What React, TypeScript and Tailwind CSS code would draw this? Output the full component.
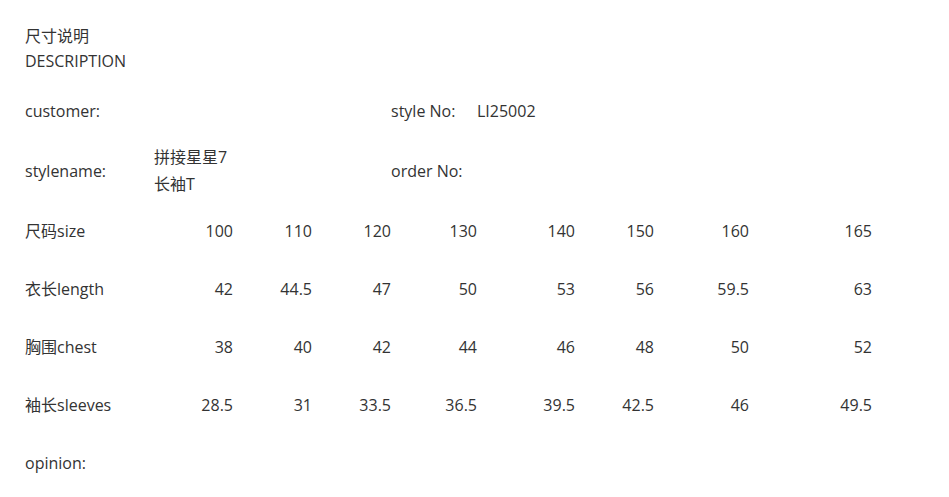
import React from 'react';

const widths = ['w-[129px]', 'w-[79px]', 'w-[79px]', 'w-[79px]', 'w-[86px]', 'w-[98px]', 'w-[79px]', 'w-[95px]', 'w-[123px]'];

const rows: { label: string; values: string[] }[] = [
  { label: '尺码size', values: ['100', '110', '120', '130', '140', '150', '160', '165'] },
  { label: '衣长length', values: ['42', '44.5', '47', '50', '53', '56', '59.5', '63'] },
  { label: '胸围chest', values: ['38', '40', '42', '44', '46', '48', '50', '52'] },
  { label: '袖长sleeves', values: ['28.5', '31', '33.5', '36.5', '39.5', '42.5', '46', '49.5'] },
];

export default function App() {
  return (
    <div
      className="min-h-[497px] w-[949px] bg-white pl-[25px] pt-[24px] text-[16px] text-[#333333]"
      style={{ fontFamily: '"Open Sans", "Noto Sans CJK SC", sans-serif' }}
    >
      {/* heading */}
      <div className="leading-[25px]">
        <div>尺寸说明</div>
        <div>DESCRIPTION</div>
      </div>

      <div className="mt-[7px]">
        <div className="flex h-[59px] items-center">
          <div className={widths[0]}>customer:</div>
          <div className="w-[237px]" />
          <div className={widths[4]}>style No:</div>
          <div className={widths[5]}>LI25002</div>
        </div>

        <div className="flex h-[62px] items-center">
          <div className={widths[0]}>stylename:</div>
          <div className="w-[237px] leading-[27px]">
            <div>拼接星星7</div>
            <div>长袖T</div>
          </div>
          <div className={widths[4]}>order No:</div>
        </div>

        {rows.map((r) => (
          <div key={r.label} className="flex h-[58px] items-center">
            <div className={widths[0]}>{r.label}</div>
            {r.values.map((v, i) => (
              <div key={i} className={`${widths[i + 1]} text-right`}>
                {v}
              </div>
            ))}
          </div>
        ))}

        <div className="flex h-[58px] items-center">
          <div>opinion:</div>
        </div>
      </div>
    </div>
  );
}
